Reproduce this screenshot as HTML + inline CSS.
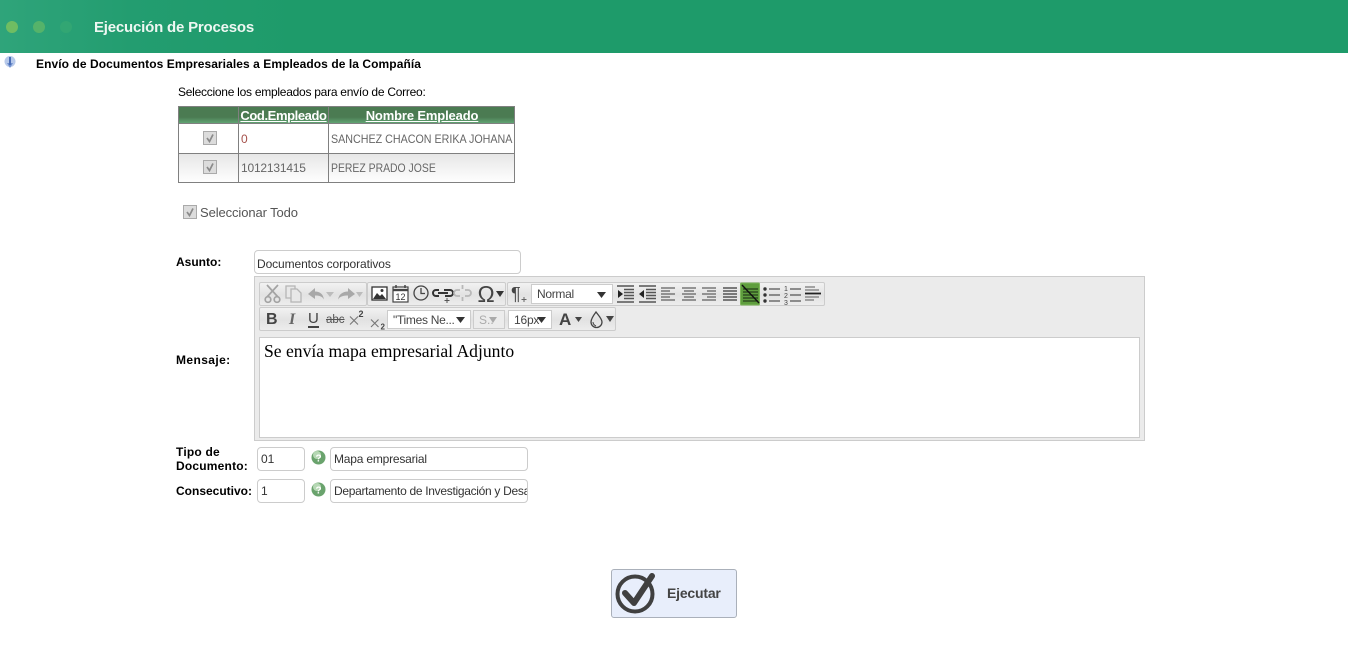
<!DOCTYPE html>
<html lang="es"><head><meta charset="utf-8"><title>Ejecución de Procesos</title>
<style>
html,body{margin:0;padding:0;background:#fff;width:1348px;height:647px;overflow:hidden}
body{font-family:"Liberation Sans",sans-serif;font-size:12px;color:#000;position:relative}
.a{position:absolute;white-space:nowrap}
.b{font-weight:bold}
.sx{transform-origin:0 50%}
.inp{position:absolute;box-sizing:border-box;background:#fff;border:1px solid #ccc;border-radius:4px;font-size:12px;color:#333;line-height:23px;padding-left:3px;overflow:hidden;white-space:nowrap}
.grp{position:absolute;box-sizing:border-box;border:1px solid #ccc;border-radius:2px;background:linear-gradient(#f2f2f2,#e2e2e2 55%,#ececec)}
.sel{position:absolute;box-sizing:border-box;background:#fff;border:1px solid #ccc;font-size:12px;color:#444;line-height:18px;padding-left:5px;white-space:nowrap;overflow:hidden}
.chk{position:absolute;box-sizing:border-box;width:14px;height:14px;border:1px solid #aaa;background:#dcdcdc}
.hl{position:absolute;top:106px;height:18px;font-weight:bold;font-size:13px;color:#fff;text-decoration:underline;line-height:19px;text-align:center;white-space:nowrap}
svg{position:absolute;overflow:visible}
</style></head><body>

<!-- header -->
<div class="a" style="left:0;top:0;width:1348px;height:53px;background:linear-gradient(90deg,#2fa47a 0,#239d70 130px,#1e9b6a 300px,#1e9b6a 100%)"></div>
<div class="a" style="left:6px;top:21px;width:12px;height:12px;border-radius:50%;background:#6fbd62"></div>
<div class="a" style="left:33px;top:21px;width:12px;height:12px;border-radius:50%;background:#55b36a"></div>
<div class="a" style="left:60px;top:21px;width:12px;height:12px;border-radius:50%;background:#32a673"></div>
<div class="a b" style="left:94px;top:19px;font-size:15px;line-height:18px;color:#eef7f2;letter-spacing:-.2px">Ejecución de Procesos</div>

<!-- section title -->
<svg style="left:3px;top:55px" width="14" height="14" viewBox="0 0 14 14"><circle cx="7" cy="6.500" r="5.500" fill="#b7c9ea"/><path d="M4 8l3 5 3-5z" fill="#6f90cf"/><rect x="6" y="2" width="2" height="8" fill="#4a6db5"/></svg>
<div class="a b" style="left:36px;top:57px;line-height:15px;letter-spacing:.07px">Envío de Documentos Empresariales a Empleados de la Compañía</div>

<div class="a" style="left:178px;top:85px;line-height:15px;letter-spacing:-.26px">Seleccione los empleados para envío de Correo:</div>

<!-- table -->
<div class="a" style="left:178px;top:106px;width:337px;height:18px;background:linear-gradient(#4b7b52 0,#4b7b52 62%,#64ab78 100%)"></div>
<div class="a" style="left:178px;top:124px;width:337px;height:29px;background:#fff"></div>
<div class="a" style="left:178px;top:153px;width:337px;height:30px;background:linear-gradient(#e6e6e6,#fff)"></div>
<div class="a" style="left:178px;top:106px;width:337px;height:77px;box-sizing:border-box;border:1px solid #808080"></div>
<div class="a" style="left:178px;top:123px;width:337px;height:1px;background:#808080"></div>
<div class="a" style="left:178px;top:153px;width:337px;height:1px;background:#808080"></div>
<div class="a" style="left:238px;top:106px;width:1px;height:77px;background:#808080"></div>
<div class="a" style="left:328px;top:106px;width:1px;height:77px;background:#808080"></div>
<div class="hl" style="left:239px;width:89px;letter-spacing:-.4px">Cod.Empleado</div>
<div class="hl" style="left:329px;width:186px;letter-spacing:-.15px">Nombre Empleado</div>

<div class="chk" style="left:203px;top:131px"></div>
<svg style="left:203px;top:131px" width="14" height="14"><path d="M4 7l2.500 3.500L10 3.500" fill="none" stroke="#8a8a8a" stroke-width="1.700"/></svg>
<div class="chk" style="left:203px;top:160px"></div>
<svg style="left:203px;top:160px" width="14" height="14"><path d="M4 7l2.500 3.500L10 3.500" fill="none" stroke="#8a8a8a" stroke-width="1.700"/></svg>

<div class="a" style="left:241px;top:132px;line-height:15px;color:#a5504a">0</div>
<div class="a sx" style="left:331px;top:132px;line-height:15px;color:#666;transform:scaleX(.892)">SANCHEZ CHACON ERIKA JOHANA</div>
<div class="a" style="left:241px;top:161px;line-height:15px;color:#666;letter-spacing:-.2px">1012131415</div>
<div class="a sx" style="left:331px;top:161px;line-height:15px;color:#666;transform:scaleX(.868)">PEREZ PRADO JOSE</div>

<div class="chk" style="left:183px;top:205px"></div>
<svg style="left:183px;top:205px" width="14" height="14"><path d="M4 7l2.500 3.500L10 3.500" fill="none" stroke="#8a8a8a" stroke-width="1.700"/></svg>
<div class="a" style="left:200px;top:205px;font-size:13px;line-height:15px;color:#555;letter-spacing:-.1px">Seleccionar Todo</div>

<!-- asunto -->
<div class="a b" style="left:176px;top:255px;line-height:15px">Asunto:</div>
<div class="inp" style="left:254px;top:250px;width:267px;height:24px;letter-spacing:-.1px;line-height:26px;padding-left:2px">Documentos corporativos</div>

<!-- editor -->
<div class="a b" style="left:176px;top:353px;line-height:15px;letter-spacing:.4px">Mensaje:</div>
<div class="a" style="left:254px;top:276px;width:891px;height:165px;box-sizing:border-box;background:#ebebeb;border:1px solid #ccc"></div>
<div class="grp" style="left:259px;top:282px;width:108px;height:24px"></div>
<div class="grp" style="left:367px;top:282px;width:139px;height:24px"></div>
<div class="grp" style="left:507px;top:282px;width:318px;height:24px"></div>
<div class="grp" style="left:259px;top:307px;width:357px;height:24px"></div>

<!-- row1 icons -->
<svg style="left:259px;top:282px" width="108" height="24" fill="none">
 <g stroke="#a3a3a3" stroke-width="1.700"><path d="M8 3l11 12M19 3L8 15"/><circle cx="9" cy="17.500" r="2.800"/><circle cx="18" cy="17.500" r="2.800"/></g>
 <g stroke="#b5b5b5" stroke-width="1.300" fill="#e8e8e8"><path d="M27 4h9v12h-9z"/><path d="M32 7h6l4 4v9H32z"/></g>
 <path d="M49 12l7-6v3.500c5 0 8 2.500 9 8-2-3.500-5-4-9-4V17z" fill="#a8a8a8"/><path d="M67 10h8l-4 5z" fill="#bcbcbc"/>
 <path d="M96 12l-7-6v3.500c-5 0-9 2.500-10 8 2-3.500 6-4 10-4V17z" fill="#a8a8a8"/><path d="M97 10h7l-3.500 5z" fill="#bcbcbc"/>
</svg>
<svg style="left:367px;top:282px" width="139" height="24" fill="none">
 <rect x="5" y="5" width="15" height="13" fill="#fff" stroke="#333" stroke-width="1.300"/><path d="M6 17l4-6 3 3 2-2 4 5z" fill="#333"/><circle cx="15" cy="8.500" r="1.500" fill="#333"/>
 <rect x="26" y="5" width="15" height="15" fill="#fff" stroke="#444" stroke-width="1.200"/><path d="M26 8h15" stroke="#444" stroke-width="2.400"/><path d="M29 3v3M38 3v3" stroke="#444" stroke-width="1.500"/>
 <text x="28.500" y="18" font-family="Liberation Sans" font-size="9" fill="#333">12</text>
 <circle cx="54" cy="11" r="7" stroke="#444" stroke-width="1.300"/><path d="M54 6v5.500h4" stroke="#444" stroke-width="1.300"/>
 <g stroke="#333" stroke-width="2"><path d="M72 8h-3a3 3 0 0 0 0 6h3M77 8h6a3 3 0 0 1 0 6h-5M71 11h10"/></g><path d="M80 16v5M77.500 18.500h5" stroke="#555"/>
 <g stroke="#b8b8b8" stroke-width="1.800"><path d="M93 8h-3a3 3 0 0 0 0 6h3M98 8h3a3 3 0 0 1 0 6h-3M95.500 3v4M95.500 15v4"/></g>
 <text x="110.500" y="20" font-family="Liberation Sans" font-size="23" fill="#444">Ω</text><path d="M129 9h8l-4 6z" fill="#333"/>
</svg>
<svg style="left:507px;top:282px" width="318" height="24" fill="none">
 <text x="4" y="18" font-family="Liberation Sans" font-size="18" fill="#444">¶</text><path d="M17 15v5M14.500 17.500h5" stroke="#666"/>
</svg>
<div class="sel" style="left:531px;top:284px;width:82px;height:20px;letter-spacing:-.3px">Normal</div>
<svg style="left:596px;top:291px" width="12" height="8"><path d="M1 1h9l-4.500 6z" fill="#333"/></svg>
<svg style="left:616px;top:282px" width="208" height="24" fill="none">
 <g stroke="#555" stroke-width="1.400"><path d="M1 4h17M8 7.500h10M8 10.500h10M8 13.500h10M8 16.500h10M1 20h17"/></g><path d="M2 8l5 4-5 4z" fill="#222"/>
 <g stroke="#555" stroke-width="1.400"><path d="M23 4h17M30 7.500h10M30 10.500h10M30 13.500h10M30 16.500h10M23 20h17"/></g><path d="M28 8l-5 4 5 4z" fill="#222"/>
 <g stroke="#777" stroke-width="1.400"><path d="M45 6h14M45 9h9M45 12h14M45 15h9M45 18h14"/><path d="M66 6h14M68 9h10M66 12h14M68 15h10M66 18h14"/><path d="M86 6h14M91 9h9M86 12h14M91 15h9M86 18h14"/></g>
 <g stroke="#555" stroke-width="1.400"><path d="M107 6h14M107 9h14M107 12h14M107 15h14M107 18h14"/></g>
 <rect x="124.500" y="1" width="19" height="22" rx="1" fill="#5f9e3e" stroke="#7eb65c"/>
 <g stroke="#26401c" stroke-width="1.300"><path d="M127 7h15M127 10h15M127 13h15M127 16h15M127 19h15"/></g><path d="M126 3l17 18" stroke="#111" stroke-width="1.400"/>
 <circle cx="149" cy="7" r="1.700" fill="#333"/><circle cx="149" cy="13" r="1.700" fill="#333"/><circle cx="149" cy="19" r="1.700" fill="#333"/>
 <path d="M153 7h11M153 13h11M153 19h11" stroke="#555" stroke-width="1.300"/>
 <g font-family="Liberation Sans" font-size="7" fill="#444"><text x="168" y="9">1</text><text x="168" y="16">2</text><text x="168" y="23">3</text></g>
 <path d="M174 7h11M174 13h11M174 19h11" stroke="#555" stroke-width="1.300"/>
 <path d="M189 5h10M189 8h14M189 15h14M189 18h9" stroke="#777" stroke-width="1.300"/><path d="M189 11.500h16" stroke="#222" stroke-width="1.800"/>
</svg>

<!-- row2 icons -->
<div class="a b" style="left:266px;top:310px;font-size:16px;line-height:19px;color:#444">B</div>
<div class="a b" style="left:289px;top:310px;font-size:16px;line-height:19px;color:#666;font-family:'Liberation Serif',serif;font-style:italic">I</div>
<div class="a" style="left:308px;top:310px;font-size:15px;line-height:17px;color:#444;border-bottom:2px solid #444;height:16px">U</div>
<div class="a" style="left:326px;top:313px;font-size:11.500px;line-height:15px;color:#555;text-decoration:line-through">abc</div>
<svg style="left:348px;top:309px" width="40" height="22" fill="none">
 <path d="M2 7.500l8 8M10 7.500l-8 8M23 10.500l7.500 7.500M30.500 10.500L23 18" stroke="#777" stroke-width="1.100"/>
 <text x="10.500" y="8" font-family="Liberation Sans" font-size="9" font-weight="bold" fill="#444">2</text>
 <text x="32.500" y="20.500" font-family="Liberation Sans" font-size="8" font-weight="bold" fill="#444">2</text>
</svg>
<div class="sel" style="left:387px;top:310px;width:84px;height:19px;letter-spacing:-.3px">"Times Ne...</div>
<svg style="left:455px;top:316px" width="12" height="8"><path d="M1 1h9l-4.500 6z" fill="#333"/></svg>
<div class="sel" style="left:473px;top:310px;width:32px;height:19px;background:#ececec;color:#aaa">S..</div>
<svg style="left:488px;top:316px" width="12" height="8"><path d="M1 1h8l-4 6z" fill="#aaa"/></svg>
<div class="sel" style="left:508px;top:310px;width:44px;height:19px;padding-left:5px;letter-spacing:-.2px">16px</div>
<svg style="left:536px;top:316px" width="12" height="8"><path d="M1 1h9l-4.500 6z" fill="#333"/></svg>
<div class="a b" style="left:559px;top:310px;font-size:17px;line-height:19px;color:#444">A</div>
<svg style="left:574px;top:316px" width="10" height="8"><path d="M1 1h7l-3.500 5z" fill="#444"/></svg>
<svg style="left:589px;top:310px" width="28" height="20" fill="none"><path d="M7 2c-3 4-5 7-5 10a5 5 0 0 0 11 0c0-3-3-6-6-10z" stroke="#444" stroke-width="1.300"/><path d="M4 12c0 2 1 3 3 4" stroke="#444"/><path d="M17 6h8l-4 6z" fill="#444"/></svg>

<div class="a" style="left:259px;top:337px;width:881px;height:101px;box-sizing:border-box;background:#fff;border:1px solid #ccc"></div>
<div class="a" style="left:264px;top:341px;font-family:'Liberation Serif',serif;font-size:17.600px;line-height:20px;color:#000">Se envía mapa empresarial Adjunto</div>

<!-- tipo / consecutivo -->
<div class="a b" style="left:176px;top:445px;line-height:14px;letter-spacing:.2px">Tipo de<br>Documento:</div>
<div class="inp" style="left:257px;top:447px;width:48px;height:24px">01</div>
<svg style="left:311px;top:450px" width="15" height="15"><circle cx="7.500" cy="7.500" r="7" fill="#6aa36d"/><circle cx="6" cy="5" r="4" fill="#b6d8b4"/><text x="4.500" y="11.500" font-family="Liberation Sans" font-size="10" font-weight="bold" fill="#fff">?</text></svg>
<div class="inp" style="left:330px;top:447px;width:198px;height:24px;letter-spacing:-.2px">Mapa empresarial</div>

<div class="a b" style="left:176px;top:484px;line-height:15px">Consecutivo:</div>
<div class="inp" style="left:257px;top:479px;width:48px;height:24px">1</div>
<svg style="left:311px;top:482px" width="15" height="15"><circle cx="7.500" cy="7.500" r="7" fill="#6aa36d"/><circle cx="6" cy="5" r="4" fill="#b6d8b4"/><text x="4.500" y="11.500" font-family="Liberation Sans" font-size="10" font-weight="bold" fill="#fff">?</text></svg>
<div class="inp" style="left:330px;top:479px;width:198px;height:24px;letter-spacing:-.3px">Departamento de Investigación y Desarrollo</div>

<!-- button -->
<div class="a" style="left:611px;top:569px;width:126px;height:49px;box-sizing:border-box;background:#e8eefb;border:1px solid #aab0ba;border-radius:3px"></div>
<svg style="left:611px;top:569px" width="60" height="49" fill="none"><circle cx="24" cy="25" r="17.500" stroke="#404040" stroke-width="4"/><path d="M14 24l9 10L41 7" stroke="#404040" stroke-width="6" stroke-linecap="round" stroke-linejoin="round"/></svg>
<div class="a b" style="left:667px;top:584px;font-size:14px;line-height:18px;color:#444;letter-spacing:-.2px">Ejecutar</div>

</body></html>
